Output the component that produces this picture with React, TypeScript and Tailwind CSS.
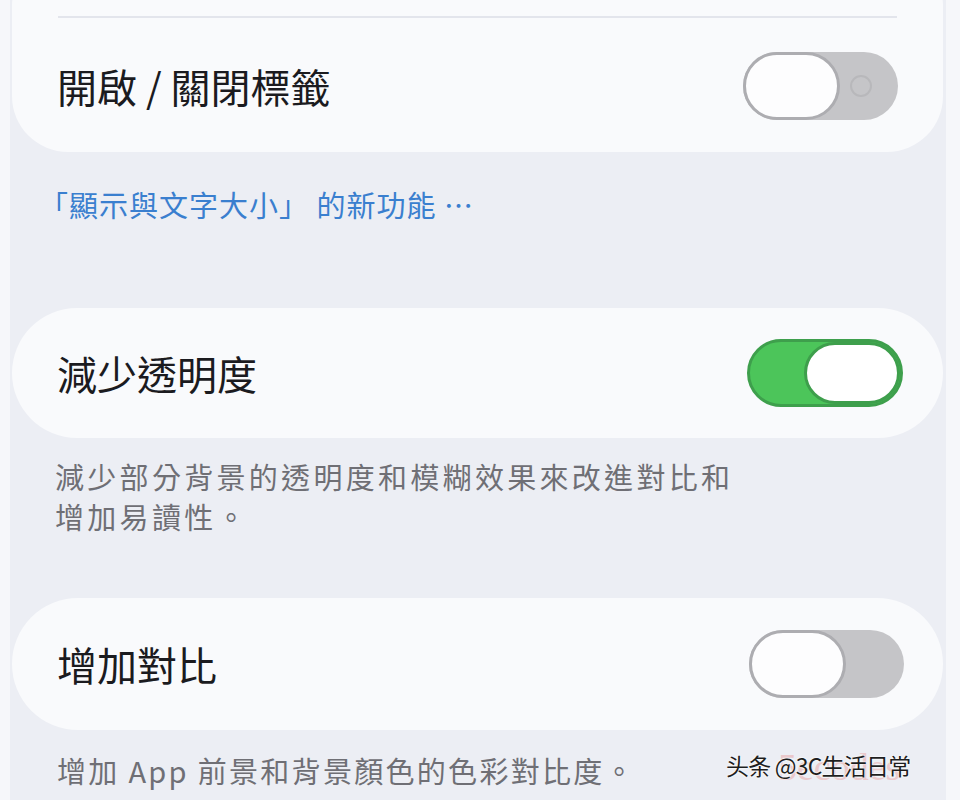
import React from "react";

const font = { fontFamily: '"Noto Sans CJK TC", "Noto Sans", sans-serif' };

function Toggle({ on, ring }: { on: boolean; ring?: boolean }) {
  if (on) {
    return (
      <div className="relative w-[156px] h-[68px] rounded-full bg-[#4cc55a] border-[3px] border-[#3e9f4c] flex justify-end shrink-0">
        <div className="w-[96px] h-full rounded-full bg-white border-[3px] border-[#3e9f4c]" />
      </div>
    );
  }
  return (
    <div className="relative w-[155px] h-[68px] rounded-full bg-[#c5c5c8] flex items-center justify-between shrink-0">
      <div className="w-[97px] h-full rounded-full bg-[#fdfdfe] border-[3px] border-[#adadb1]" />
      {ring ? (
        <div className="mr-[26px] w-[22px] h-[22px] rounded-full border-2 border-[#b8b8bb]" />
      ) : null}
    </div>
  );
}

export default function App() {
  return (
    <div
      className="w-[960px] h-[800px] overflow-hidden flex bg-[#eceef4] relative"
      style={font}
    >
      <div className="w-[10px] h-full bg-[#f6f7fa]" />
      <div className="flex-1 flex flex-col pl-[2px] pr-[3px]">
        {/* Card 1 */}
        <div className="-mt-[50px] h-[202px] rounded-[56px] bg-[#f9fafc] flex flex-col pt-[66px]">
          <div className="mx-[46px] h-[2px] bg-[#e3e5ec]" />
          <div className="flex-1 flex items-center justify-between pl-[45px] pr-[45px] pt-[2px]">
            <span className="text-[40px] leading-none text-[#1b1b1f]">
              開啟 / 關閉標籤
            </span>
            <Toggle on={false} ring />
          </div>
        </div>

        {/* Blue link */}
        <div className="mt-[33px] h-[40px] pl-[27px] flex items-center text-[29px] text-[#3a7fcf] tracking-[1px]">
          「顯示與文字大小」 的新功能 ⋯
        </div>

        {/* Card 2 */}
        <div className="mt-[83px] h-[130px] rounded-[65px] bg-[#f9fafc] flex items-center justify-between pl-[45px] pr-[40px]">
          <span className="text-[40px] leading-none text-[#1b1b1f]">減少透明度</span>
          <Toggle on />
        </div>

        {/* Description */}
        <div className="mt-[18px] pl-[43px] text-[29px] leading-[40px] text-[#6f6f75] tracking-[3.3px]">
          <div>減少部分背景的透明度和模糊效果來改進對比和</div>
          <div>增加易讀性。</div>
        </div>

        {/* Card 3 */}
        <div className="mt-[62px] h-[132px] rounded-[66px] bg-[#f9fafc] flex items-center justify-between pl-[45px] pr-[39px]">
          <span className="text-[40px] leading-none text-[#1b1b1f]">增加對比</span>
          <Toggle on={false} />
        </div>

        {/* Bottom description */}
        <div className="mt-[20px] pl-[45px] text-[29px] leading-[40px] text-[#6f6f75] tracking-[2.3px]">
          增加 App 前景和背景顏色的色彩對比度。
        </div>
      </div>
      <div className="w-[14px] h-full bg-[#f6f7fa]" />

      {/* Watermark */}
      <div className="absolute left-[726px] top-[750px] h-[44px] w-[200px]">
        <span
          className="absolute left-[52px] top-[-2px] text-[38px] leading-none text-[#e9b0b0] opacity-60"
          style={{ fontFamily: '"Liberation Serif", serif' }}
        >
          5ecodes
        </span>
        <span
          className="absolute left-0 top-[4px] text-[23px] leading-none text-[#1e1e1e] tracking-[-0.8px] whitespace-nowrap"
          style={{
            fontFamily: '"Noto Sans CJK SC", "Noto Sans", sans-serif',
            textShadow: "0 0 2px #ffffff, 0 0 2px #ffffff",
          }}
        >
          头条 @3C生活日常
        </span>
      </div>
    </div>
  );
}
